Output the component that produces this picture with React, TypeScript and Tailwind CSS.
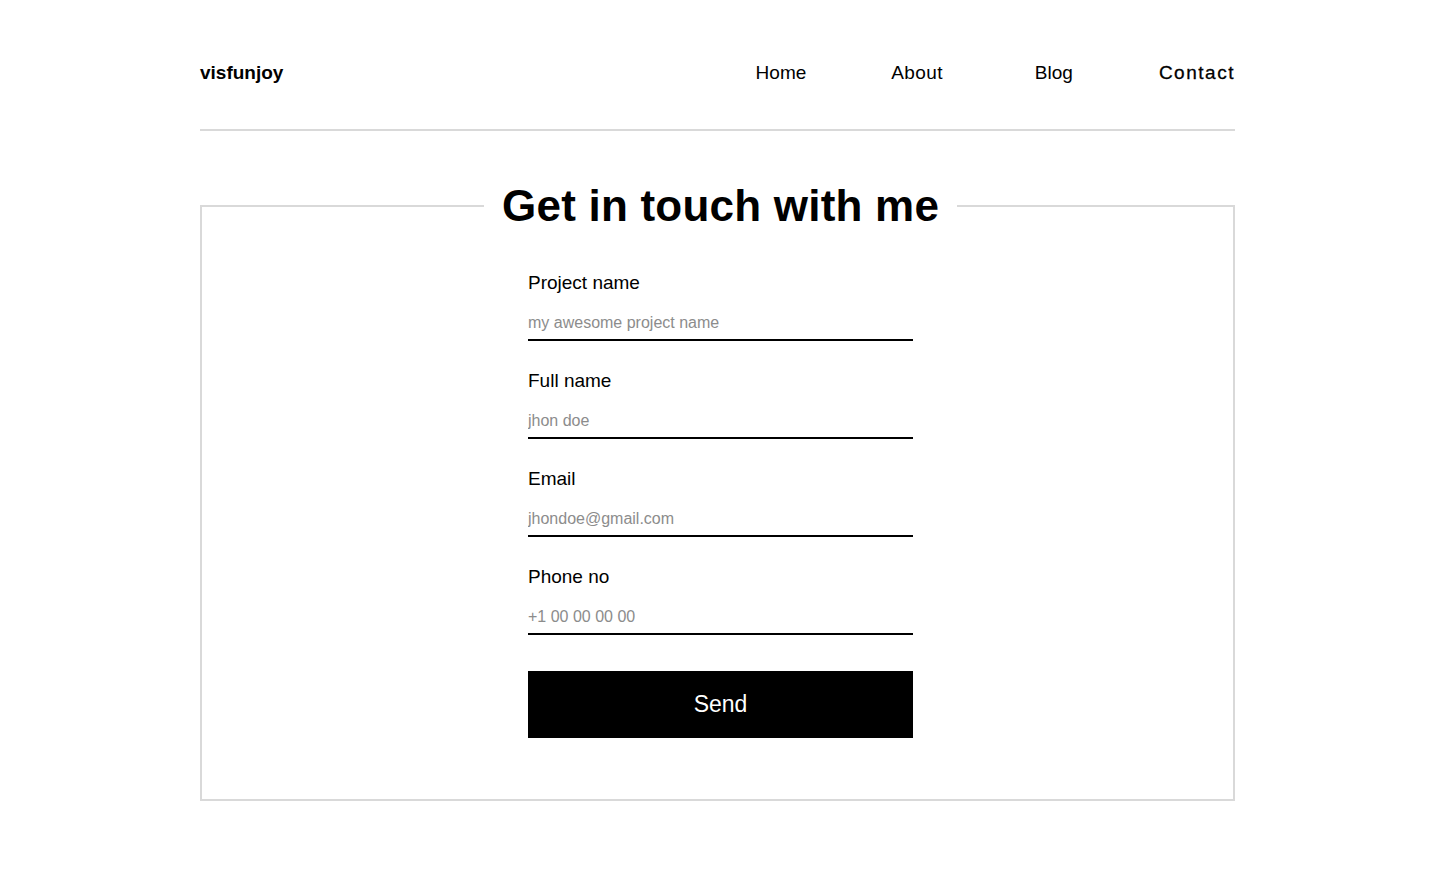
import type { ReactNode } from "react";

const fields = [
  { label: "Project name", placeholder: "my awesome project name", type: "text" },
  { label: "Full name", placeholder: "jhon doe", type: "text" },
  { label: "Email", placeholder: "jhondoe@gmail.com", type: "email" },
  { label: "Phone no", placeholder: "+1 00 00 00 00", type: "tel" },
];

function NavLink({ children, className }: { children: ReactNode; className?: string }) {
  return (
    <a href="#" className={`text-[19px] leading-[30px] text-black ${className ?? ""}`}>
      {children}
    </a>
  );
}

export default function App() {
  return (
    <div className="min-h-screen bg-white font-['Liberation_Sans',Arial,sans-serif] text-black">
      <div className="ml-[200px] w-[1035px]">
        {/* Header */}
        <header className="flex items-center border-b-2 border-[#d9d9d9] pt-[58px] pb-[41px]">
          <a href="#" className="text-[19px] font-bold leading-[30px]">
            visfunjoy
          </a>
          <nav className="ml-auto flex items-center">
            <NavLink>Home</NavLink>
            <NavLink className="ml-[85px] tracking-[0.02em]">About</NavLink>
            <NavLink className="ml-[92px]">Blog</NavLink>
            <NavLink className="ml-[86px] font-medium tracking-[0.08em] [-webkit-text-stroke:0.3px_black]">
              Contact
            </NavLink>
          </nav>
        </header>

        {/* Contact form */}
        <fieldset className="mt-[49px] border-2 border-[#d9d9d9] pb-[61px]">
          <legend className="ml-[282px] px-[18px] text-[44px] font-bold leading-[52px] tracking-[0.005em]">
            Get in touch with me
          </legend>
          <form className="ml-[326px] mt-[38px] flex w-[385px] flex-col" onSubmit={(e) => e.preventDefault()}>
            <div className="flex flex-col gap-[27px]">
              {fields.map((f) => (
                <label key={f.label} className="flex flex-col">
                  <span className="text-[19px] leading-[26px]">{f.label}</span>
                  <input
                    type={f.type}
                    placeholder={f.placeholder}
                    className="mt-[11px] h-[34px] border-b-2 border-black bg-transparent text-[16px] outline-none placeholder:text-[#8c8c8c]"
                  />
                </label>
              ))}
            </div>
            <button type="submit" className="mt-[36px] h-[67px] w-full bg-black text-[23px] text-white">
              Send
            </button>
          </form>
        </fieldset>
      </div>
    </div>
  );
}
